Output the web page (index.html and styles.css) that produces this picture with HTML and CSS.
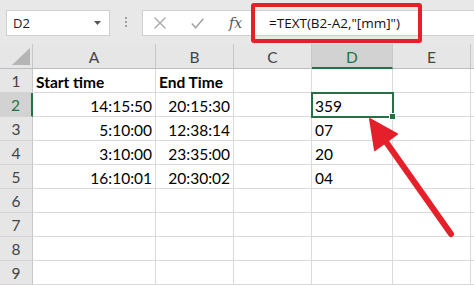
FILE: index.html
```html
<!DOCTYPE html>
<html lang="en">
<head>
  <meta charset="UTF-8" />
  <title>Sheet - TEXT minutes</title>
  <link rel="stylesheet" href="styles.css">
</head>
<body>

  <div class="app">
    <div class="bar">
      <div class="namebox">
        <span>D2</span>
        <svg class="caret" width="7" height="4" viewBox="0 0 7 4"><path d="M0 0h7L3.5 4z" fill="#555"/></svg>
      </div>
      <div class="grip"><i></i><i></i><i></i></div>
      <div class="fbox">
        <div class="ficons">
          <svg width="14" height="12" viewBox="0 0 14 12"><path d="M1.5 0.5l11 11M12.5 0.5l-11 11" stroke="#a6a6a6" stroke-width="1.3" fill="none"/></svg>
          <svg width="13" height="11" viewBox="0 0 13 11"><path d="M0.8 5.5l3.8 4.3L12.3 0.8" stroke="#a6a6a6" stroke-width="1.6" fill="none"/></svg>
          <span class="fx">fx</span>
        </div>
        <span class="formula">=TEXT(B2-A2,"[mm]")</span>
      </div>
    </div>

    <div class="sheet">
      <div class="corner"><svg width="18" height="17" viewBox="0 0 18 17"><path d="M0 17H18V0z" fill="#b5b5b5"/></svg></div>
      <div class="colhead">A</div>
      <div class="colhead">B</div>
      <div class="colhead">C</div>
      <div class="colhead active">D</div>
      <div class="colhead">E</div>
      <div class="colhead"></div>

      <div class="rowhead">1</div>
      <div class="cell bold">Start time</div>
      <div class="cell bold">End Time</div>
      <div class="cell"></div>
      <div class="cell"></div>
      <div class="cell"></div>
      <div class="cell"></div>

      <div class="rowhead active">2</div>
      <div class="cell num">14:15:50</div>
      <div class="cell num">20:15:30</div>
      <div class="cell"></div>
      <div class="cell sel">359</div>
      <div class="cell"></div>
      <div class="cell"></div>

      <div class="rowhead">3</div>
      <div class="cell num">5:10:00</div>
      <div class="cell num">12:38:14</div>
      <div class="cell"></div>
      <div class="cell">07</div>
      <div class="cell"></div>
      <div class="cell"></div>

      <div class="rowhead">4</div>
      <div class="cell num">3:10:00</div>
      <div class="cell num">23:35:00</div>
      <div class="cell"></div>
      <div class="cell">20</div>
      <div class="cell"></div>
      <div class="cell"></div>

      <div class="rowhead">5</div>
      <div class="cell num">16:10:01</div>
      <div class="cell num">20:30:02</div>
      <div class="cell"></div>
      <div class="cell">04</div>
      <div class="cell"></div>
      <div class="cell"></div>

      <div class="rowhead">6</div>
      <div class="cell"></div><div class="cell"></div><div class="cell"></div>
      <div class="cell"></div><div class="cell"></div><div class="cell"></div>

      <div class="rowhead">7</div>
      <div class="cell"></div><div class="cell"></div><div class="cell"></div>
      <div class="cell"></div><div class="cell"></div><div class="cell"></div>

      <div class="rowhead">8</div>
      <div class="cell"></div><div class="cell"></div><div class="cell"></div>
      <div class="cell"></div><div class="cell"></div><div class="cell"></div>

      <div class="rowhead">9</div>
      <div class="cell"></div><div class="cell"></div><div class="cell"></div>
      <div class="cell"></div><div class="cell"></div><div class="cell"></div>
    </div>

    <!-- annotations drawn on top of the screenshot -->
    <div class="callout"></div>
    <svg class="arrow" width="474" height="285" viewBox="0 0 474 285">
      <line x1="451" y1="234" x2="384" y2="139" stroke="#e5202a" stroke-width="6" stroke-linecap="round"/>
      <polygon points="370,119 375,150 397,134" fill="#e5202a" stroke="#e5202a" stroke-width="2" stroke-linejoin="round"/>
    </svg>
  </div>

</body>
</html>
```

FILE: styles.css
```css
body {
  margin: 0;
  background: #fff;
  font-family: Lato, 'Liberation Sans', sans-serif;
  overflow: hidden;
}
.app {
  position: relative;
  width: 474px;
  height: 285px;
  overflow: hidden;
}

/* formula bar */
.bar {
  height: 44px;
  box-sizing: border-box;
  background: #e8e8e8;
  padding: 10px 0 0 6px;
  display: flex;
  align-items: flex-start;
}
.namebox {
  width: 104px;
  height: 26px;
  box-sizing: border-box;
  background: #fff;
  border: 1px solid #cfcfcf;
  display: flex;
  align-items: center;
  justify-content: space-between;
  padding: 0 8px 0 6px;
  font-family: 'Open Sans', sans-serif;
  font-size: 13px;
  color: #222;
}
.grip {
  width: 3px;
  margin: 7px 14px 0 15px;
  display: flex;
  flex-direction: column;
  gap: 2px;
}
.grip i {
  display: block;
  width: 2px;
  height: 2px;
  background: #a0a0a0;
}
.fbox {
  flex: 1;
  height: 26px;
  box-sizing: border-box;
  background: #fff;
  border: 1px solid #cfcfcf;
  border-right: none;
  display: flex;
  align-items: center;
}
.ficons {
  display: flex;
  align-items: center;
  gap: 24px;
  padding-left: 10px;
  width: 116px;
}
.fx {
  font-family: 'DejaVu Serif', serif;
  font-style: italic;
  font-size: 14px;
  color: #555;
  margin-left: 1px;
}
.formula {
  font-family: 'Open Sans', sans-serif;
  font-size: 13.5px;
  color: #111;
  padding-left: 0;
}

/* grid */
.sheet {
  display: grid;
  grid-template-columns: 33px 123px 78px 78px 81px 78px 1fr;
  grid-template-rows: 25px;
  grid-auto-rows: 24px;
  font-size: 15.5px;
  color: #000;
}
.corner, .colhead, .rowhead {
  background: #e6e6e6;
  color: #444;
  box-sizing: border-box;
  border-right: 1px solid #c8c8c8;
  border-bottom: 1px solid #bdbdbd;
}
.corner {
  display: flex;
  align-items: flex-end;
  justify-content: flex-end;
  padding: 0 2px 3px 0;
}
.colhead {
  display: flex;
  align-items: center;
  justify-content: center;
  padding-top: 2px;
}
.rowhead {
  display: flex;
  align-items: center;
  justify-content: center;
  border-bottom-color: #d4d4d4;
}
.colhead.active {
  background: #d2d2d2;
  color: #217346;
  border-bottom: 2px solid #217346;
}
.rowhead.active {
  background: #d2d2d2;
  color: #217346;
  border-right: 2px solid #217346;
}
.cell {
  box-sizing: border-box;
  border-right: 1px solid #dadada;
  border-bottom: 1px solid #dadada;
  padding: 2px 3px 0 3px;
  line-height: 22px;
  white-space: nowrap;
}
.cell.bold {
  font-weight: bold;
}
.cell.num {
  text-align: right;
}
.cell.sel {
  position: relative;
  outline: 2px solid #217346;
  outline-offset: -1px;
}
.cell.sel::after {
  content: '';
  position: absolute;
  right: -4px;
  bottom: -4px;
  width: 5px;
  height: 5px;
  background: #217346;
  border: 1px solid #fff;
}

/* annotations */
.callout {
  position: absolute;
  left: 251px;
  top: 3px;
  width: 171px;
  height: 40px;
  box-sizing: border-box;
  border: 4px solid #e5202a;
  border-radius: 3px;
}
.arrow {
  position: absolute;
  left: 0;
  top: 0;
  pointer-events: none;
}
```
